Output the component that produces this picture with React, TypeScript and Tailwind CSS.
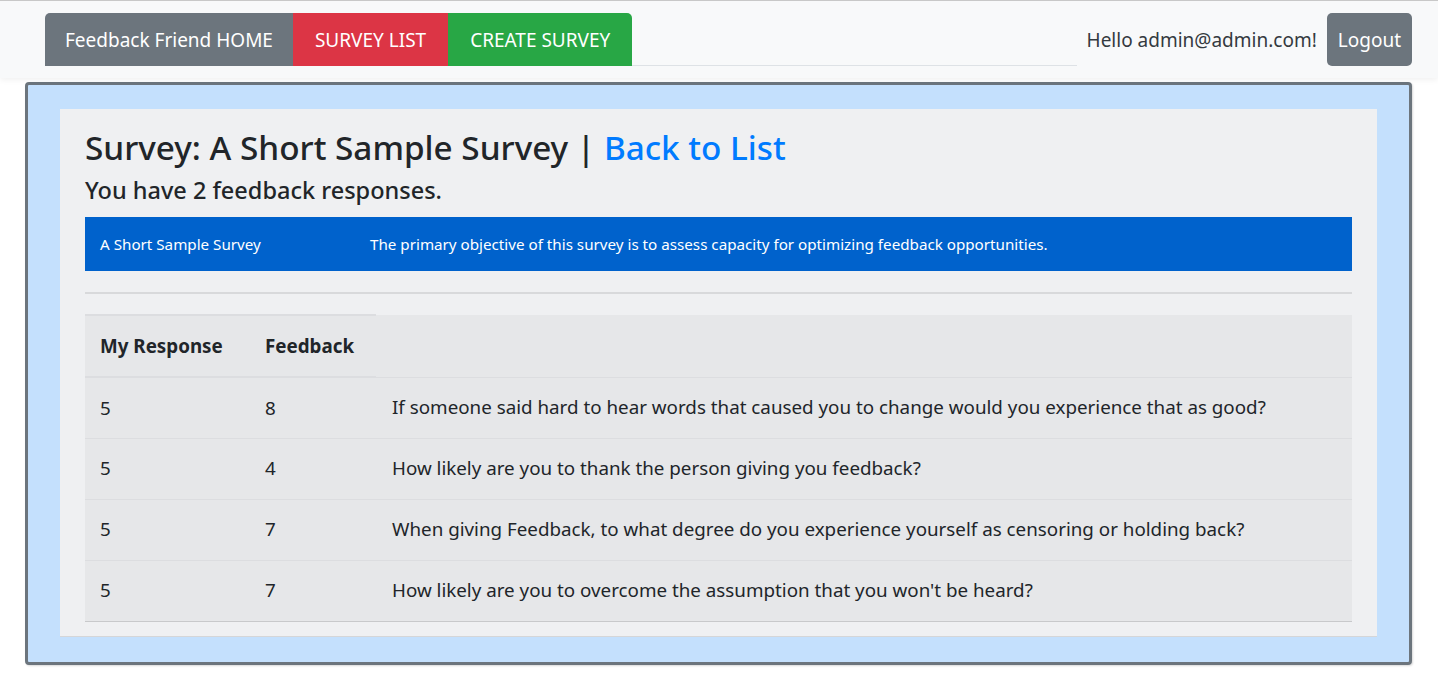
import React from "react";

const rows = [
  { mine: 5, feedback: 8, question: "If someone said hard to hear words that caused you to change would you experience that as good?" },
  { mine: 5, feedback: 4, question: "How likely are you to thank the person giving you feedback?" },
  { mine: 5, feedback: 7, question: "When giving Feedback, to what degree do you experience yourself as censoring or holding back?" },
  { mine: 5, feedback: 7, question: "How likely are you to overcome the assumption that you won't be heard?" },
];

export default function App() {
  return (
    <div className="min-h-[696px] bg-white text-[#212529] font-['Noto_Sans','Open_Sans',sans-serif]">
      {/* Navbar */}
      <nav className="relative z-10 flex h-[78px] items-start border-t border-[#c8c8c8] bg-[#f8f9fa] pl-[45px] pr-[26px] pt-[12px] shadow-[0_2px_6px_rgba(0,0,0,0.06)]">
        <ul className="flex h-[53px] w-[1032px] border-b border-[#dee2e6]">
          <li className="flex h-[53px] items-center rounded-tl-[5px] bg-[#6c757d] px-[20px] pt-[1px] text-[19px] text-white">
            Feedback Friend HOME
          </li>
          <li className="flex h-[53px] items-center bg-[#dc3545] px-[22px] pt-[1px] text-[19px] text-white">
            SURVEY LIST
          </li>
          <li className="flex h-[53px] items-center rounded-tr-[5px] bg-[#28a745] px-[22px] pt-[1px] text-[19px] text-white">
            CREATE SURVEY
          </li>
        </ul>
        <div className="ml-auto flex items-center gap-[10px]">
          <span className="pt-[1px] text-[19px] text-[#343a40]">Hello admin@admin.com!</span>
          <button className="flex h-[53px] items-center rounded-[5px] bg-[#6c757d] px-[11px] pt-[1px] text-[19px] text-white">
            Logout
          </button>
        </div>
      </nav>

      {/* Main box */}
      <div className="mx-[25px] mt-[4px] w-[1387px] rounded-[4px] border-[3px] border-[#6c757d] bg-[#c4e0fd] px-[32px] pb-[25px] pt-[24px] shadow-[1px_1px_2px_rgba(0,0,0,0.15)]">
        <div className="border-b border-[#d5d6d8] bg-[#eff0f2] px-[25px] pb-[14px] pt-[18px]">
          <h2 className="text-[33.3px] font-medium leading-[40px]">
            Survey: A Short Sample Survey | <a className="text-[#007bff]">Back to List</a>
          </h2>
          <h4 className="mt-[8px] text-[23.5px] font-medium leading-[30px]">You have 2 feedback responses.</h4>

          <div className="mt-[12px] flex h-[54px] items-center bg-[#0062cc] text-[15.2px] text-white">
            <div className="w-[285px] pl-[15px]">A Short Sample Survey</div>
            <div>The primary objective of this survey is to assess capacity for optimizing feedback opportunities.</div>
          </div>

          <hr className="mt-[21px] border-t-2 border-[#d8d9db]" />

          <table className="mt-[20px] w-full border-collapse text-[18.8px]">
            <thead>
              <tr className="h-[62px] bg-[#e6e7e9]">
                <th className="w-[165px] border-y-2 border-[#dcdde0] pl-[15px] text-left font-bold">My Response</th>
                <th className="w-[126px] border-y-2 border-[#dcdde0] pl-[15px] text-left font-bold">Feedback</th>
                <th className="border-b border-[#dcdde0]"></th>
              </tr>
            </thead>
            <tbody>
              {rows.map((r, i) => (
                <tr
                  key={i}
                  className={`h-[61px] bg-[#e6e7e9] ${i === rows.length - 1 ? "border-b border-[#c8c9cb]" : "border-b border-[#dcdde0]"}`}
                >
                  <td className="pl-[15px]">{r.mine}</td>
                  <td className="pl-[15px]">{r.feedback}</td>
                  <td className="pl-[16px]">{r.question}</td>
                </tr>
              ))}
            </tbody>
          </table>
        </div>
      </div>
    </div>
  );
}
